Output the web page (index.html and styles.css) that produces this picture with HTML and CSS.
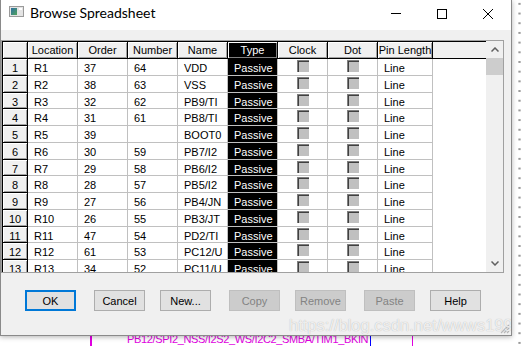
FILE: index.html
```html
<!DOCTYPE html>
<html lang="en">
<head>
    <meta charset="UTF-8">
    <title>Browse Spreadsheet</title>
    <link rel="stylesheet" href="styles.css">
</head>
<body>
<div class="canvas">
    <div class="dots"></div>
    <div class="wire wire-a"></div>
    <div class="wire wire-b"></div>
    <div class="wire wire-c"></div>
    <div class="net">PB12/SPI2_NSS/I2S2_WS/I2C2_SMBA/TIM1_BKIN</div>

    <div class="dialog">
        <div class="titlebar">
            <svg class="app-icon" width="15" height="11" viewBox="0 0 15 11">
                <defs>
                    <linearGradient id="pic" x1="0" y1="0" x2="1" y2="1">
                        <stop offset="0" stop-color="#2f6fa3"/>
                        <stop offset="1" stop-color="#4fa35a"/>
                    </linearGradient>
                </defs>
                <rect x="0.5" y="0.5" width="14" height="10" fill="#e4e4e4" stroke="#9a9a9a"/>
                <rect x="2" y="2" width="6" height="7" fill="url(#pic)"/>
                <rect x="10" y="2" width="3" height="2" fill="#fff"/>
            </svg>
            <span class="title">Browse Spreadsheet</span>
            <div class="caps">
                <span class="cap"><svg width="10" height="10"><path d="M0 4.5H10" stroke="#000"/></svg></span>
                <span class="cap"><svg width="10" height="10"><rect x="0.5" y="0.5" width="9" height="9" fill="none" stroke="#000"/></svg></span>
                <span class="cap"><svg width="10" height="10"><path d="M0 0L10 10M10 0L0 10" stroke="#000"/></svg></span>
            </div>
        </div>

        <div class="client">
            <div class="grid-box">
                <div class="grid">
                    <div class="hdr">
                        <span class="fx"></span>
                        <span class="fx">Location</span>
                        <span class="fx">Order</span>
                        <span class="fx">Number</span>
                        <span class="fx">Name</span>
                        <span class="fx type-h">Type</span>
                        <span class="fx">Clock</span>
                        <span class="fx">Dot</span>
                        <span class="fx">Pin Length</span>
                        <span class="fill"></span>
                    </div>
                    <div class="row"><span class="fx">1</span><span class="cell">R1</span><span class="cell">37</span><span class="cell">64</span><span class="cell">VDD</span><span class="cell type">Passive</span><span class="cell chk"><i></i></span><span class="cell chk"><i></i></span><span class="cell">Line</span><span class="fill"></span></div>
                    <div class="row"><span class="fx">2</span><span class="cell">R2</span><span class="cell">38</span><span class="cell">63</span><span class="cell">VSS</span><span class="cell type">Passive</span><span class="cell chk"><i></i></span><span class="cell chk"><i></i></span><span class="cell">Line</span><span class="fill"></span></div>
                    <div class="row"><span class="fx">3</span><span class="cell">R3</span><span class="cell">32</span><span class="cell">62</span><span class="cell">PB9/TI</span><span class="cell type">Passive</span><span class="cell chk"><i></i></span><span class="cell chk"><i></i></span><span class="cell">Line</span><span class="fill"></span></div>
                    <div class="row"><span class="fx">4</span><span class="cell">R4</span><span class="cell">31</span><span class="cell">61</span><span class="cell">PB8/TI</span><span class="cell type">Passive</span><span class="cell chk"><i></i></span><span class="cell chk"><i></i></span><span class="cell">Line</span><span class="fill"></span></div>
                    <div class="row"><span class="fx">5</span><span class="cell">R5</span><span class="cell">39</span><span class="cell"></span><span class="cell">BOOT0</span><span class="cell type">Passive</span><span class="cell chk"><i></i></span><span class="cell chk"><i></i></span><span class="cell">Line</span><span class="fill"></span></div>
                    <div class="row"><span class="fx">6</span><span class="cell">R6</span><span class="cell">30</span><span class="cell">59</span><span class="cell">PB7/I2</span><span class="cell type">Passive</span><span class="cell chk"><i></i></span><span class="cell chk"><i></i></span><span class="cell">Line</span><span class="fill"></span></div>
                    <div class="row"><span class="fx">7</span><span class="cell">R7</span><span class="cell">29</span><span class="cell">58</span><span class="cell">PB6/I2</span><span class="cell type">Passive</span><span class="cell chk"><i></i></span><span class="cell chk"><i></i></span><span class="cell">Line</span><span class="fill"></span></div>
                    <div class="row"><span class="fx">8</span><span class="cell">R8</span><span class="cell">28</span><span class="cell">57</span><span class="cell">PB5/I2</span><span class="cell type">Passive</span><span class="cell chk"><i></i></span><span class="cell chk"><i></i></span><span class="cell">Line</span><span class="fill"></span></div>
                    <div class="row"><span class="fx">9</span><span class="cell">R9</span><span class="cell">27</span><span class="cell">56</span><span class="cell">PB4/JN</span><span class="cell type">Passive</span><span class="cell chk"><i></i></span><span class="cell chk"><i></i></span><span class="cell">Line</span><span class="fill"></span></div>
                    <div class="row"><span class="fx">10</span><span class="cell">R10</span><span class="cell">26</span><span class="cell">55</span><span class="cell">PB3/JT</span><span class="cell type">Passive</span><span class="cell chk"><i></i></span><span class="cell chk"><i></i></span><span class="cell">Line</span><span class="fill"></span></div>
                    <div class="row"><span class="fx">11</span><span class="cell">R11</span><span class="cell">47</span><span class="cell">54</span><span class="cell">PD2/TI</span><span class="cell type">Passive</span><span class="cell chk"><i></i></span><span class="cell chk"><i></i></span><span class="cell">Line</span><span class="fill"></span></div>
                    <div class="row"><span class="fx">12</span><span class="cell">R12</span><span class="cell">61</span><span class="cell">53</span><span class="cell">PC12/U</span><span class="cell type">Passive</span><span class="cell chk"><i></i></span><span class="cell chk"><i></i></span><span class="cell">Line</span><span class="fill"></span></div>
                    <div class="row"><span class="fx">13</span><span class="cell">R13</span><span class="cell">34</span><span class="cell">52</span><span class="cell">PC11/U</span><span class="cell type">Passive</span><span class="cell chk"><i></i></span><span class="cell chk"><i></i></span><span class="cell">Line</span><span class="fill"></span></div>
                </div>
                <div class="vscroll">
                    <span class="arrow"><svg width="8" height="5"><path d="M0.5 4.5L4 1L7.5 4.5" fill="none" stroke="#606060" stroke-width="1.5"/></svg></span>
                    <span class="thumb"></span>
                    <span class="arrow down"><svg width="8" height="5"><path d="M0.5 0.5L4 4L7.5 0.5" fill="none" stroke="#606060" stroke-width="1.5"/></svg></span>
                </div>
            </div>

            <div class="buttons">
                <button class="default">OK</button>
                <button>Cancel</button>
                <button>New...</button>
                <button disabled>Copy</button>
                <button disabled>Remove</button>
                <button disabled>Paste</button>
                <button>Help</button>
            </div>

            <svg class="grip" width="11" height="11" viewBox="0 0 11 11">
                <path d="M10 2L2 10M10 5L5 10M10 8L8 10" stroke="#b8b8b8" stroke-width="1.2"/>
            </svg>
        </div>

        <div class="watermark">https://blog.csdn.net/wwws1994</div>
    </div>
</div>
</body>
</html>
```

FILE: styles.css
```css
* {
    box-sizing: border-box;
}
body {
    margin: 0;
    background: #fff;
    font-family: "Liberation Sans", Arial, sans-serif;
    font-size: 11px;
    color: #000;
}
.canvas {
    position: relative;
    width: 523px;
    height: 346px;
    overflow: hidden;
    background: #fff;
}

/* schematic behind the dialog */
.dots {
    position: absolute;
    left: 516px;
    top: 0;
    width: 7px;
    height: 346px;
    background-image: radial-gradient(circle, #999 1px, transparent 1.3px);
    background-size: 7px 9.7px;
    background-position: 0 -1px;
}
.wire {
    position: absolute;
    top: 326px;
    width: 1px;
    height: 20px;
}
.wire-a {
    left: 90px;
    width: 2px;
    background: #e000e0;
}
.wire-b {
    left: 370px;
    background: #0000ff;
}
.wire-c {
    left: 412px;
    background: #e000e0;
}
.net {
    position: absolute;
    left: 127px;
    top: 333px;
    font-size: 11px;
    letter-spacing: -0.35px;
    color: #e000e0;
    white-space: nowrap;
}

/* dialog window */
.dialog {
    position: absolute;
    left: 0;
    top: 0;
    width: 512px;
    height: 336px;
    display: flex;
    flex-direction: column;
    background: #f0f0f0;
    border: 1px solid #8a8a8a;
    border-top: none;
    box-shadow: 0 1px 5px rgba(0,0,0,0.3);
    overflow: hidden;
}
.titlebar {
    height: 30px;
    display: flex;
    align-items: flex-start;
    background: #fff;
}
.app-icon {
    margin: 6px 0 0 8px;
}
.title {
    margin: 5px 0 0 6px;
    font-family: Lato, "Noto Sans", sans-serif;
    font-size: 14px;
    line-height: 16px;
}
.caps {
    margin-left: auto;
    display: flex;
}
.cap {
    width: 46px;
    height: 30px;
    display: flex;
    justify-content: center;
    padding-top: 9px;
}
.cap svg {
    display: block;
}

.client {
    position: relative;
    flex: 1;
    padding-top: 10px;
}

/* spreadsheet grid */
.grid-box {
    display: flex;
    width: 503px;
    height: 233px;
    border: 1px solid #a0a0a0;
}
.grid {
    width: 484px;
    overflow: hidden;
    background: #fff;
}
.hdr,
.row {
    display: grid;
    grid-template-columns: 26px repeat(7, 50px) 55px 53px;
}
.hdr {
    height: 18px;
    border-top: 1px solid #000;
}
.row {
    height: 16.75px;
}
.hdr > span,
.row > span {
    white-space: nowrap;
    overflow: hidden;
}
.hdr > :first-child,
.row > :first-child {
    border-left: 1px solid #000;
}
.fx {
    background: #f0f0f0;
    border-right: 1px solid #000;
    border-bottom: 1px solid #000;
    box-shadow: inset 1px 1px #fff, inset -1px -1px #a0a0a0;
    text-align: center;
    padding-top: 2px;
    line-height: 14px;
}
.hdr .fx {
    padding-top: 1px;
}
.hdr .fill {
    background: #f0f0f0;
    border-bottom: 1px solid #000;
}
.type-h {
    background: #000;
    color: #fff;
    box-shadow: inset 1px 1px #fff, inset -1px -1px #808080;
}
.cell {
    border-right: 1px solid #c0c0c0;
    border-bottom: 1px solid #c0c0c0;
    padding: 2px 0 0 6px;
    line-height: 14px;
}
.type {
    background: #000;
    color: #fff;
}
.chk {
    padding: 0;
    display: flex;
    justify-content: center;
}
.chk i {
    display: block;
    width: 12px;
    height: 12px;
    margin-top: 1px;
    background: #c0c0c0;
    border-top: 1px solid #808080;
    border-left: 1px solid #808080;
    box-shadow: inset 1px 1px #404040;
}

.vscroll {
    width: 17px;
    display: flex;
    flex-direction: column;
    background: #f0f0f0;
}
.arrow {
    height: 17px;
    display: flex;
    align-items: center;
    justify-content: center;
}
.arrow svg {
    display: block;
}
.arrow.down {
    margin-top: auto;
}
.thumb {
    height: 17px;
    background: #cdcdcd;
}

/* dialog buttons */
.buttons {
    display: flex;
    margin-top: 17px;
    padding-left: 24px;
}
button {
    width: 51px;
    height: 21px;
    margin: 0 0 0 15px;
    padding: 0;
    font-family: "Liberation Sans", Arial, sans-serif;
    font-size: 11px;
    color: #000;
    background: #e1e1e1;
    border: 1px solid #adadad;
}
button:first-child {
    margin-left: 0;
}
button:nth-child(even) {
    margin-left: 18px;
}
button.default {
    border: 2px solid #0078d7;
}
button:disabled {
    background: #cccccc;
    border-color: #bfbfbf;
    color: #838383;
}
.grip {
    position: absolute;
    right: 1px;
    bottom: 1px;
}

.watermark {
    position: absolute;
    left: 288px;
    top: 316px;
    font-size: 16.5px;
    color: rgba(255,255,255,0.8);
    text-shadow: 0 0 1px rgba(0,0,0,0.3);
    white-space: nowrap;
}
```
